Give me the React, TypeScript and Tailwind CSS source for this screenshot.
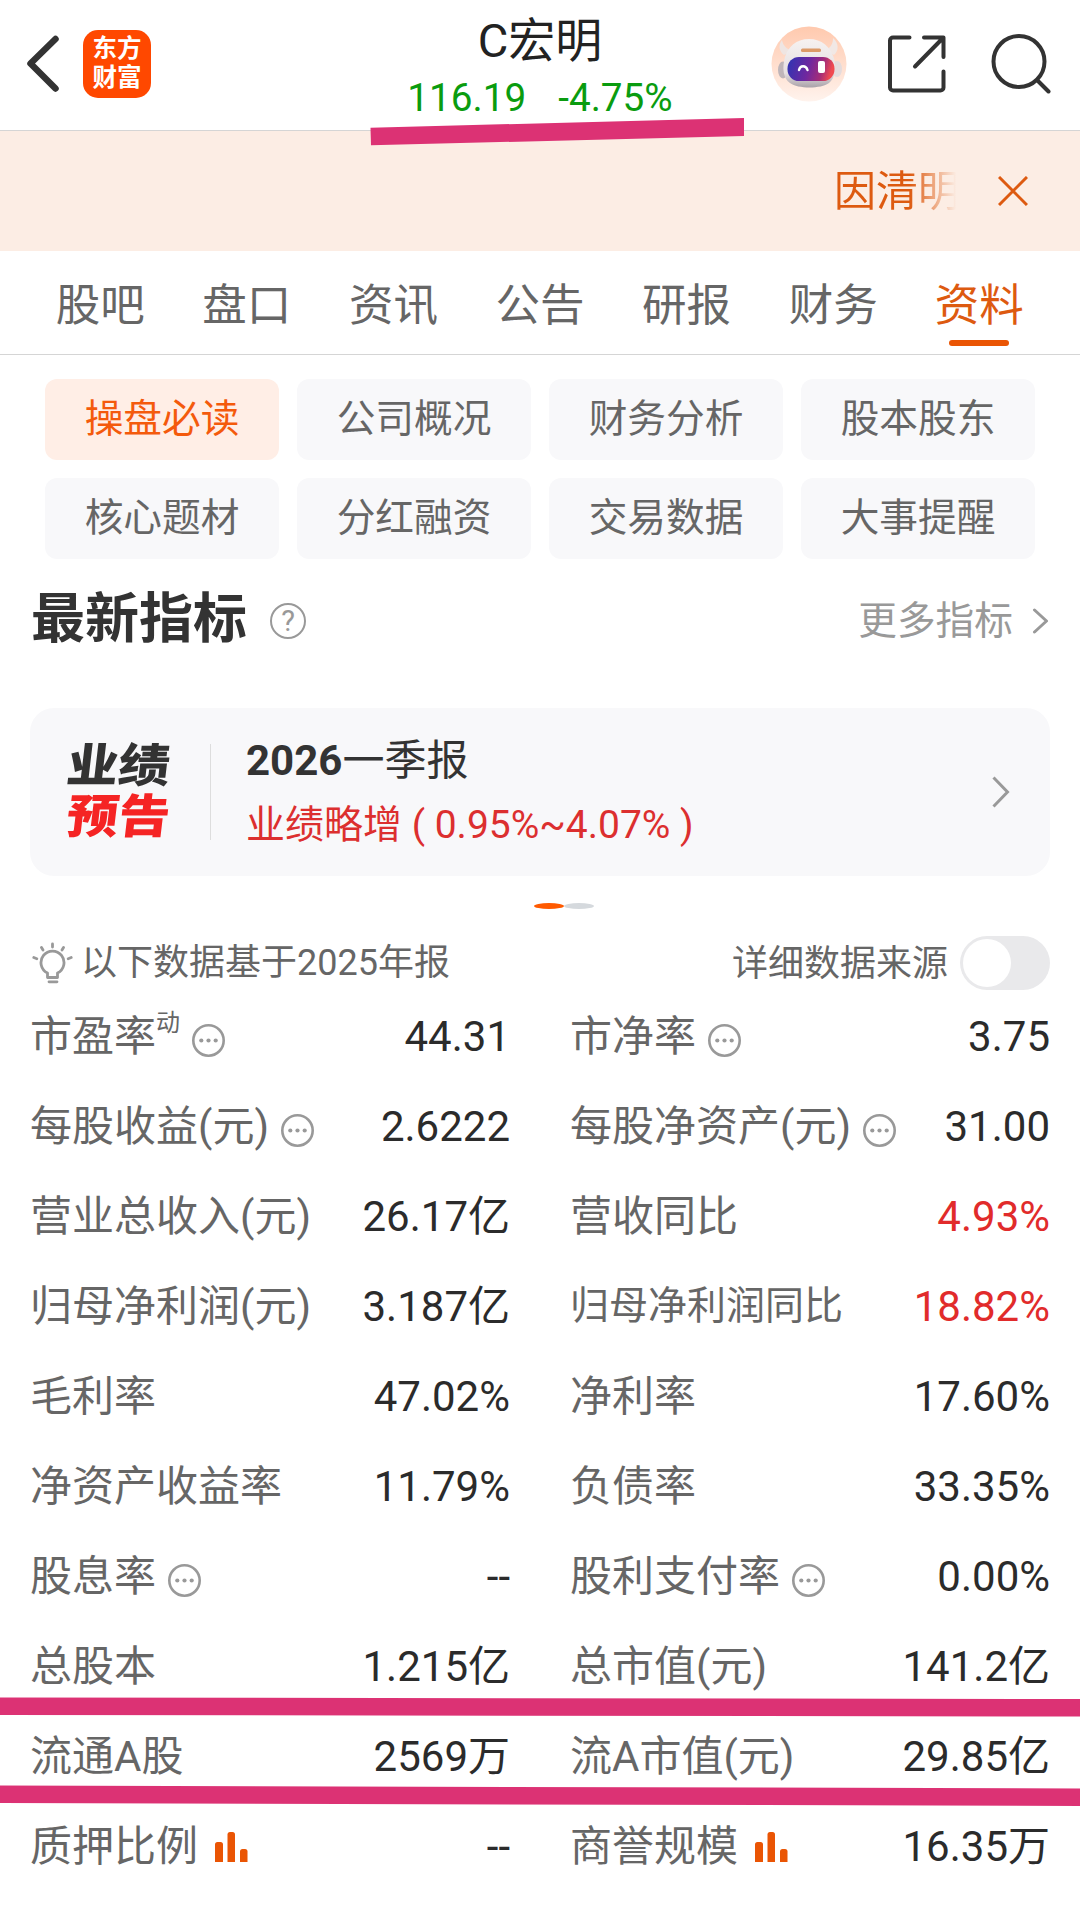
import React from 'react';

type Metric = {
  label: string;
  sup?: string;
  icon?: 'more' | 'chart';
  value: string;
  up?: boolean;
  small?: boolean;
};

const tabs = ['股吧', '盘口', '资讯', '公告', '研报', '财务', '资料'];

const chips = ['操盘必读', '公司概况', '财务分析', '股本股东', '核心题材', '分红融资', '交易数据', '大事提醒'];

const metrics: Metric[] = [
  { label: '市盈率', sup: '动', icon: 'more', value: '44.31' },
  { label: '市净率', icon: 'more', value: '3.75' },
  { label: '每股收益(元)', icon: 'more', value: '2.6222' },
  { label: '每股净资产(元)', icon: 'more', value: '31.00' },
  { label: '营业总收入(元)', value: '26.17亿' },
  { label: '营收同比', value: '4.93%', up: true },
  { label: '归母净利润(元)', value: '3.187亿' },
  { label: '归母净利润同比', value: '18.82%', up: true, small: true },
  { label: '毛利率', value: '47.02%' },
  { label: '净利率', value: '17.60%' },
  { label: '净资产收益率', value: '11.79%' },
  { label: '负债率', value: '33.35%' },
  { label: '股息率', icon: 'more', value: '--' },
  { label: '股利支付率', icon: 'more', value: '0.00%' },
  { label: '总股本', value: '1.215亿' },
  { label: '总市值(元)', value: '141.2亿' },
  { label: '流通A股', value: '2569万' },
  { label: '流A市值(元)', value: '29.85亿' },
  { label: '质押比例', icon: 'chart', value: '--' },
  { label: '商誉规模', icon: 'chart', value: '16.35万' },
];

function MoreIcon() {
  return (
    <svg className="mt-[8px] ml-[12px] shrink-0" width="33" height="33" viewBox="0 0 33 33">
      <circle cx="16.5" cy="16.5" r="15.2" fill="none" stroke="#999" strokeWidth="2.6" />
      <circle cx="9.3" cy="16.5" r="2.1" fill="#999" />
      <circle cx="16.5" cy="16.5" r="2.1" fill="#999" />
      <circle cx="23.7" cy="16.5" r="2.1" fill="#999" />
    </svg>
  );
}

function ChartIcon() {
  return (
    <svg className="mt-[2px] ml-[17px] shrink-0" width="33" height="30" viewBox="0 0 33 30" fill="#ea5504">
      <path d="M0 30V12.5a2.5 2.5 0 0 1 2.5-2.5h3A2.5 2.5 0 0 1 8 12.500V30Z" />
      <path d="M12.500 30V2.500A2.500 2.500 0 0 1 15 0h2.500A2.500 2.500 0 0 1 20 2.500V30Z" />
      <path d="M25 30V19.500a2.500 2.500 0 0 1 2.500-2.500h2.500a2.500 2.500 0 0 1 2.500 2.500V30Z" />
    </svg>
  );
}

function Robot() {
  return (
    <svg width="76" height="76" viewBox="0 0 76 76">
      <defs>
        <linearGradient id="disc" x1="0" y1="0" x2="0" y2="1">
          <stop offset="0" stopColor="#ffc9ae" />
          <stop offset="1" stopColor="#fff3ed" />
        </linearGradient>
        <linearGradient id="visor" x1="0" y1="0" x2="1" y2="0.15">
          <stop offset="0" stopColor="#2c35b4" />
          <stop offset="0.5" stopColor="#6f279f" />
          <stop offset="0.8" stopColor="#a52d78" />
          <stop offset="1" stopColor="#f04a50" />
        </linearGradient>
        <linearGradient id="shell" x1="0" y1="0" x2="0" y2="1">
          <stop offset="0" stopColor="#f6f1f0" />
          <stop offset="0.7" stopColor="#e6e0e2" />
          <stop offset="1" stopColor="#a9a2a9" />
        </linearGradient>
      </defs>
      <circle cx="38" cy="38" r="37.500" fill="url(#disc)" />
      <path d="M11 14c-4 5-3 11 2 15l8-4c-5-2-9-5-10-11Z" fill="#efe5e2" />
      <path d="M62 12c6 5 6 13 1 17l-9-5c5-2 8-5 8-12Z" fill="#f1e8e5" />
      <ellipse cx="12" cy="44" rx="5" ry="8.500" fill="#bfb5b9" />
      <ellipse cx="66" cy="43" rx="5" ry="8" fill="#e4dbdc" />
      <path d="M38 13c13 0 21 8 24.500 18C66 42 64 52 58 57c-8 6-31 6-39 0C12 52 11 42 14 31 17 21 25 13 38 13Z" fill="url(#shell)" />
      <rect x="30" y="22.500" width="20" height="3.600" rx="1.500" fill="#dc9a68" />
      <rect x="16.500" y="31" width="47" height="24" rx="11.500" fill="url(#visor)" />
      <path d="M28 44c1-5 7-5 8.500 0" fill="none" stroke="#fff" strokeWidth="2.400" strokeLinecap="round" />
      <rect x="47" y="35" width="7" height="12" rx="2" fill="#fff" />
    </svg>
  );
}

function Header() {
  return (
    <header className="relative flex h-[130px] items-center pb-[3px]">
      <svg className="ml-[25px]" width="36" height="60" viewBox="0 0 36 60" fill="none" stroke="#333" strokeWidth="6.500" strokeLinecap="round" strokeLinejoin="round">
        <path d="M30.500 6 5.500 30.500 30.500 55.500" transform="translate(0 -1)" />
      </svg>
      <div className="ml-[22px] flex h-[68px] w-[68px] flex-col items-center justify-center rounded-[15px] bg-[#ff4800] pb-px text-[24.500px] leading-[29px] font-bold text-white">
        <span>东方</span>
        <span>财富</span>
      </div>
      <div className="absolute inset-x-0 top-0 flex flex-col items-center">
        <div className="mt-[11px] h-[60px] text-[47px] leading-[60px] text-[#222]">C宏明</div>
        <div className="flex h-[54px] gap-[32px] text-[38.700px] leading-[54px] text-[#0a9c0f]">
          <span>116.19</span>
          <span>-4.75%</span>
        </div>
      </div>
      <div className="ml-auto flex items-center pr-[29px]">
        <Robot />
        <svg className="ml-[41px]" width="58" height="58" viewBox="0 0 58 58" fill="none" stroke="#333" strokeWidth="4" strokeLinecap="round" strokeLinejoin="round">
          <path d="M21.500 2.500H5a3 3 0 0 0-3 3V52.500a3 3 0 0 0 3 3H52.500a3 3 0 0 0 3-3V36.500" />
          <path d="M36 2.500H55.500V22M54.500 3.500 27 31.500" />
        </svg>
        <svg className="ml-[45px]" width="60" height="60" viewBox="0 0 60 60" fill="none" stroke="#333" strokeWidth="4" strokeLinecap="round">
          <circle cx="28" cy="27.500" r="25.500" />
          <path d="M46.500 46.500 57.500 57.500" />
        </svg>
      </div>
    </header>
  );
}

function MetricCell({ m }: { m: Metric }) {
  return (
    <div className="flex h-[90px] items-center">
      <span className={m.small ? 'text-[39px] text-[#666]' : 'text-[42px] text-[#666]'}>{m.label}</span>
      {m.sup && <span className="mb-[26px] text-[24px] text-[#666]">{m.sup}</span>}
      {m.icon === 'more' && <MoreIcon />}
      {m.icon === 'chart' && <ChartIcon />}
      <span className={m.up ? 'ml-auto text-[42px] text-[#e12b2b]' : 'ml-auto text-[42px] text-[#2b2b2b]'}>{m.value}</span>
    </div>
  );
}

export default function App() {
  return (
    <div className="relative h-[1915px] w-[1080px] overflow-hidden bg-white font-['Roboto','Noto_Sans_CJK_SC',sans-serif] whitespace-nowrap">
      <Header />

      <div className="flex h-[121px] items-center justify-end border-t border-[#d5d5d5] bg-[#fcede4] pr-[52px]">
        <div className="bg-gradient-to-r from-[#dd5a10] from-60% to-[#dd5a10]/0 to-97% bg-clip-text pt-[2px] text-[42px] leading-[56px] text-transparent">
          因清明
        </div>
        <svg className="ml-[38px]" width="30" height="30" viewBox="0 0 30 30" stroke="#dd5a10" strokeWidth="3">
          <path d="M1 1 29 29M29 1 1 29" />
        </svg>
      </div>

      <nav className="grid h-[104px] grid-cols-7 border-b border-[#d5d5d5] px-[27px]">
        {tabs.map((t) => (
          <div
            key={t}
            className={
              t === '资料'
                ? 'flex flex-col items-center pt-[25px] pr-px text-[#dd5a10]'
                : 'flex flex-col items-center pt-[25px] text-[#666]'
            }
          >
            <span className="text-[44.500px] leading-[60px]">{t}</span>
            {t === '资料' && <span className="mt-[4px] h-[6px] w-[60px] rounded-full bg-[#ea5504]" />}
          </div>
        ))}
      </nav>

      <div className="mx-[45px] mt-[24px] grid grid-cols-4 gap-[18px]">
        {chips.map((c, i) => (
          <div
            key={c}
            className={
              i === 0
                ? 'flex h-[81px] items-center justify-center rounded-[12px] bg-[#ffeee6] pb-px text-[38.700px] text-[#f45a0c]'
                : 'flex h-[81px] items-center justify-center rounded-[12px] bg-[#f8f8fa] pb-px text-[38.700px] text-[#666]'
            }
          >
            {c}
          </div>
        ))}
      </div>

      <div className="mt-[22px] flex h-[80px] items-center px-[30px]">
        <h2 className="pl-px pb-[3px] text-[54px] leading-[76px] font-bold text-[#333]">最新指标</h2>
        <div className="ml-[23px] flex h-[36px] w-[36px] items-center justify-center rounded-full border-[2.500px] border-[#999] text-[29px] leading-none text-[#999]">
          ?
        </div>
        <span className="ml-auto text-[38.700px] text-[#999]">更多指标</span>
        <svg className="ml-[19px]" width="18" height="26" viewBox="0 0 18 26" fill="none" stroke="#999" strokeWidth="3" strokeLinecap="round" strokeLinejoin="round">
          <path d="M2.500 2 14.500 13 2.500 24" />
        </svg>
      </div>

      <div className="mx-[30px] mt-[47px] flex h-[168px] items-center rounded-[24px] bg-[#f8f8fa]">
        <div className="ml-[35px] flex w-[108px] flex-col items-center text-[51.500px] leading-[51px] font-black">
          <span className="-skew-x-6 scale-y-90 text-[#333]">业绩</span>
          <span className="-skew-x-6 scale-y-90 text-[#f52424]">预告</span>
        </div>
        <div className="ml-[37px] h-[96px] w-px bg-[#ddd]" />
        <div className="ml-[35px] flex flex-col pt-[2px]">
          <div className="h-[64px] text-[42px] leading-[64px] text-[#333]">
            <span className="font-bold">2026</span>一季报
          </div>
          <div className="h-[64px] text-[39px] leading-[64px] text-[#dc2f2f]">业绩略增 ( 0.95%~4.07% )</div>
        </div>
        <svg className="mr-[40px] ml-auto" width="18" height="32" viewBox="0 0 18 32" fill="none" stroke="#999" strokeWidth="3">
          <path d="M1.500 1.500 15.500 16 1.500 30.500" />
        </svg>
      </div>

      <div className="mt-[27px] flex justify-center pl-[48px]">
        <span className="h-[6px] w-[30px] rounded-[50%] bg-[#ff5a00]" />
        <span className="h-[6px] w-[30px] rounded-[50%] bg-[#d5d9dd]" />
      </div>

      <div className="mx-[30px] mt-[25px] flex h-[58px] items-center text-[36px] text-[#666]">
        <svg className="ml-[2px]" width="41" height="42" viewBox="0 0 41 42" fill="none" stroke="#999" strokeWidth="2.800" strokeLinecap="round" strokeLinejoin="round">
          <path d="M15.500 35.500v-4.500a11.500 11.500 0 1 1 10 0v4.500ZM17 39.800h8M20.500 2v3M9.500 5.500l1.500 2.500M31.500 5.500 30 8M1.800 15.500l3 1.200M39.200 15.500l-3 1.200" />
        </svg>
        <span className="ml-[8px]">以下数据基于2025年报</span>
        <span className="ml-auto pt-[2px]">详细数据来源</span>
        <div className="ml-[12px] flex h-[54px] w-[90px] items-center rounded-full bg-[#e9e9eb] pl-[3px]">
          <div className="h-[48px] w-[48px] rounded-full bg-white" />
        </div>
      </div>

      <div className="-mt-px grid grid-cols-2 gap-x-[60px] px-[30px]">
        {metrics.map((m) => (
          <MetricCell key={m.label} m={m} />
        ))}
      </div>

      {/* Hand-drawn highlight strokes over the content */}
      <svg className="absolute inset-0" width="1080" height="1915" viewBox="0 0 1080 1915" fill="#dc3274">
        <path d="M370.500 127.700 744 118V136L371 145.300Z" />
        <path d="M0 1697.500 1080 1699V1716.500L0 1715Z" />
        <path d="M0 1785.500 1080 1788.500V1806L0 1803Z" />
      </svg>
    </div>
  );
}
